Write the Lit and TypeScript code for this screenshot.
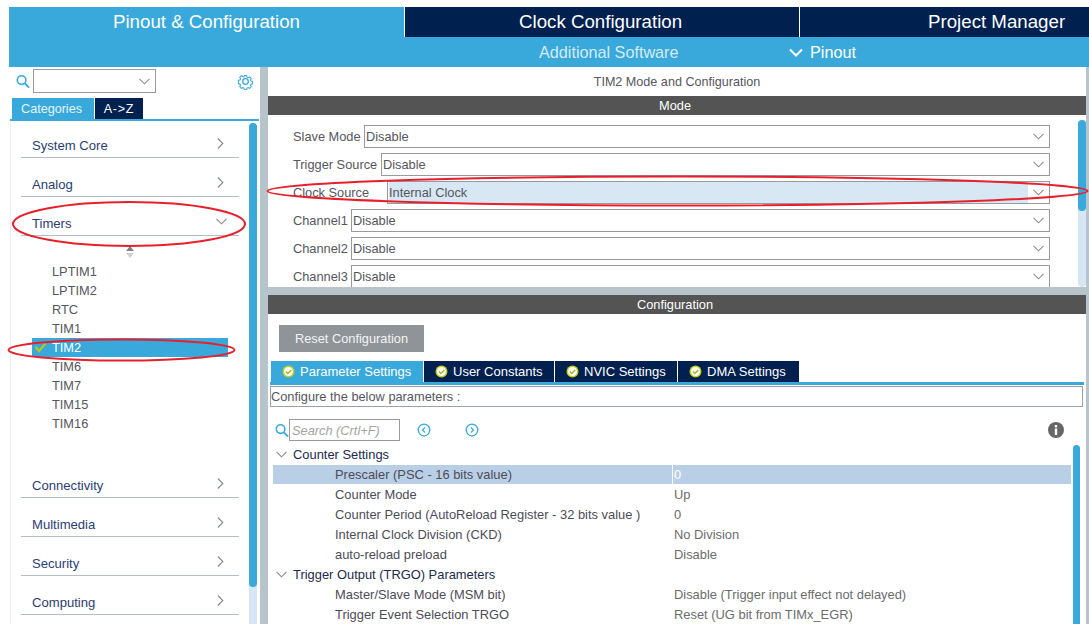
import { LitElement, html, css, svg } from "lit";
import { customElement } from "lit/decorators.js";

const chevronDown = (c = "#8b8f93", w = 11) => html`<svg class="chev" width=${w} height="7" viewBox="0 0 11 7"><path d="M.5 .8l5 5 5-5" fill="none" stroke=${c} stroke-width="1.100"/></svg>`;
const chevronRight = html`<svg class="chev" width="7" height="11" viewBox="0 0 7 11"><path d="M.8 .5l5 5-5 5" fill="none" stroke="#85898d" stroke-width="1.100"/></svg>`;
const searchIcon = html`<svg class="glass" width="14" height="15" viewBox="0 0 15 15"><circle cx="6" cy="6" r="4.600" fill="none" stroke="#39a9db" stroke-width="1.700"/><path d="M9.500 9.500L14 14" stroke="#39a9db" stroke-width="2"/></svg>`;
const checkBadge = html`<svg class="badge" width="13" height="13" viewBox="0 0 13 13"><circle cx="6.500" cy="6.500" r="6" fill="#c3cf1e"/><circle cx="6.500" cy="6.500" r="4.500" fill="#fff"/><path d="M3.800 6.500l2 2 3.500-3.500" fill="none" stroke="#a9b81a" stroke-width="1.500"/></svg>`;

@customElement("app-root")
export class AppRoot extends LitElement {
  static styles = css`
    :host { display: block; position: relative; width: 1089px; height: 624px; overflow: hidden; background: #fff; font-family: "Liberation Sans", Arial, sans-serif; font-size: 12.8px; color: #56565e; }
    .top { padding: 7px 0 0 9px; }
    .tabs { display: grid; grid-template-columns: 395px 394px 289px; column-gap: 1px; height: 30px; background: #fff; }
    .tab { background: #002050; color: #fff; font-size: 18.7px; display: flex; align-items: center; box-sizing: border-box; }
    .tab.on { background: #39a9db; padding-left: 104px; }
    .tab.clock { padding-left: 114px; }
    .tab.pm { padding-left: 128px; }
    .sub { height: 30px; background: #39a9db; color: #fff; font-size: 16.2px; display: flex; align-items: center; }
    .sub .add { margin-left: 530px; color: #d5ebf6; width: 250px; }
    .sub .pin { display: flex; align-items: center; gap: 7px; }
    .main { display: flex; height: 557px; }
    .left { width: 260px; flex: none; display: flex; flex-direction: column; }
    .splitter { width: 8px; flex: none; background: #b8c4cb; }
    .right { width: 818px; flex: none; display: flex; flex-direction: column; }
    .edge { width: 3px; flex: none; background: #b8c4cb; }
    .sr { display: flex; align-items: center; height: 31px; padding: 0 0 3px 16px; box-sizing: border-box; }
    .combo { width: 123px; height: 24px; margin-left: 3px; border: 1px solid #9a9a9a; box-sizing: border-box; display: flex; align-items: center; justify-content: flex-end; padding-right: 5px; }
    .gear { margin-left: 81px; }
    .ltabs { display: flex; gap: 1px; height: 21px; padding-left: 12px; }
    .ltab { background: #39a9db; color: #e6f4fb; width: 82px; display: flex; align-items: center; justify-content: center; font-size: 12.6px; padding-right: 3px; box-sizing: border-box; }
    .ltab.off { background: #002050; width: 48px; color: #fff; letter-spacing: 0.7px; padding-right: 0; }
    .lline { height: 2px; margin-left: 10px; width: 249px; background: #39a9db; }
    .lbody { flex: 1; display: flex; margin-left: 10px; border-left: 1px solid #eef0f1; min-height: 0; padding-left: 10px; }
    .cats { width: 218px; flex: none; }
    .cat { height: 35px; margin-top: 4px; box-sizing: border-box; border-bottom: 1px solid #b4bdc4; display: flex; align-items: flex-end; justify-content: space-between; padding: 0 15px 3px 11px; color: #2c3d72; line-height: 17px; font-size: 13.1px; }
    .cat:first-child { margin-top: 2px; }
    .cat svg { margin-bottom: 5px; }
    .cat.open svg { margin-bottom: 7px; margin-right: -3px; }
    .handle { display: flex; justify-content: center; height: 21px; padding: 10px 0 0 0; box-sizing: border-box; width: 218px; }
    .items { height: 202px; margin-left: 11px; width: 196px; padding-top: 5px; box-sizing: border-box; }
    .item { height: 19px; line-height: 19px; padding-left: 20px; position: relative; }
    .item.picked { background: #39a9db; color: #fff; }
    .item svg { position: absolute; left: 2px; top: 4px; }
    .lscroll { width: 8px; margin: 2px 0 0 10px; background: #d6e6f4; border-radius: 4px 4px 0 0; flex: none; }
    .lthumb { height: 464px; background: #39a9db; border-radius: 4px; }
    .mode { height: 220px; flex: none; display: flex; flex-direction: column; }
    .title { height: 29px; display: flex; align-items: center; justify-content: center; font-size: 12.6px; box-sizing: border-box; }
    .bar { height: 19px; background: #535453; color: #fff; display: flex; align-items: center; justify-content: center; flex: none; padding-right: 4px; box-sizing: border-box; }
    .mbody { height: 172px; display: flex; overflow: hidden; }
    .sels { width: 810px; padding: 10px 0 0 25px; box-sizing: border-box; flex: none; }
    .srow { height: 23px; margin-bottom: 5px; display: flex; align-items: center; width: 757px; }
    .srow .lab { white-space: nowrap; flex: none; }
    .sel { flex: 1; height: 23px; border: 1px solid #9a9a9a; box-sizing: border-box; display: flex; align-items: center; justify-content: space-between; padding: 0 0 0 1px; }
    .sel .chev { margin-right: 5px; flex: none; }
    .sel .val { flex: 1; height: 100%; display: flex; align-items: center; margin-right: 5px; }
    .srow.hi .val { background: #d8e7f4; }
    .mscroll { width: 8px; margin-top: 5px; background: #d6e6f4; border-radius: 4px; flex: none; height: 167px; }
    .mthumb { height: 91px; background: #39a9db; border-radius: 4px; }
    .gapbar { height: 8px; background: #b8c4cb; flex: none; }
    .config { flex: 1; display: flex; flex-direction: column; min-height: 0; }
    .reset { margin: 11px 0 0 11px; width: 145px; height: 27px; background: #8f9499; color: #f2f4f5; display: flex; align-items: center; justify-content: center; }
    .ctabs { display: flex; gap: 1px; height: 21px; margin: 9px 0 0 3px; }
    .ctab { background: #002050; color: #fff; display: flex; align-items: center; gap: 5px; font-size: 13px; box-sizing: border-box; padding-left: 11px; }
    .ctab.on { background: #39a9db; }
    .cline { height: 3px; background: #39a9db; margin-left: 2px; width: 814px; flex: none; }
    .desc { height: 21px; margin: 1px 0 0 2px; width: 813px; border: 1px solid #9aa2a8; box-sizing: border-box; display: flex; align-items: center; flex: none; }
    .tools { display: flex; align-items: center; height: 22px; margin-top: 12px; padding-left: 7px; flex: none; }
    .find { width: 111px; height: 22px; border: 1px solid #9a9a9a; box-sizing: border-box; display: flex; align-items: center; padding-left: 2px; color: #a3a3a3; font-style: italic; }
    .nav1 { margin-left: 17px; }
    .nav2 { margin-left: 34px; }
    .info { margin-left: 569px; }
    .tbody { flex: 1; display: flex; min-height: 0; padding-top: 4px; }
    .tree { width: 798px; margin-left: 5px; flex: none; }
    .node { height: 20px; display: flex; align-items: center; color: #1c2a4a; gap: 6px; padding: 0 0 1px 3px; box-sizing: border-box; font-size: 12.9px; }
    .node .chev { flex: none; }
    .leaf { height: 20px; display: grid; grid-template-columns: 399px 1fr; align-items: center; font-size: 12.9px; padding-bottom: 1px; box-sizing: border-box; }
    .leaf .k { padding-left: 62px; white-space: nowrap; color: #4c4c58; }
    .leaf .v { padding-left: 2px; white-space: nowrap; color: #6c6c6c; }
    .leaf.sel2 { background: #b9cfe6; height: 19px; margin-bottom: 1px; padding-bottom: 0; }
    .leaf.sel2 .v { color: #fff; border-left: 1px solid #fff; height: 100%; display: flex; align-items: center; padding-left: 1px; }
    .tscroll { width: 7px; margin-left: 2px; background: #39a9db; border-radius: 4px 4px 0 0; flex: none; }
    .rings { position: absolute; inset: 0; pointer-events: none; }
  `;

  render() {
    const cats1 = ["System Core", "Analog"];
    const cats2 = ["Connectivity", "Multimedia", "Security", "Computing"];
    const timers = ["LPTIM1", "LPTIM2", "RTC", "TIM1", "TIM2", "TIM6", "TIM7", "TIM15", "TIM16"];
    const sels: [string, string, number][] = [
      ["Slave Mode", "Disable", 71], ["Trigger Source", "Disable", 88], ["Clock Source", "Internal Clock", 94],
      ["Channel1", "Disable", 58], ["Channel2", "Disable", 58], ["Channel3", "Disable", 58],
    ];
    const ctabs = [["Parameter Settings", 152], ["User Constants", 130], ["NVIC Settings", 122], ["DMA Settings", 121]] as const;
    const tree: [number, string, string?][] = [
      [0, "Counter Settings"],
      [2, "Prescaler (PSC - 16 bits value)", "0"],
      [1, "Counter Mode", "Up"],
      [1, "Counter Period (AutoReload Register - 32 bits value )", "0"],
      [1, "Internal Clock Division (CKD)", "No Division"],
      [1, "auto-reload preload", "Disable"],
      [0, "Trigger Output (TRGO) Parameters"],
      [1, "Master/Slave Mode (MSM bit)", "Disable (Trigger input effect not delayed)"],
      [1, "Trigger Event Selection TRGO", "Reset (UG bit from TIMx_EGR)"],
    ];
    return html`
      <div class="top">
        <div class="tabs">
          <div class="tab on">Pinout &amp; Configuration</div>
          <div class="tab clock">Clock Configuration</div>
          <div class="tab pm">Project Manager</div>
        </div>
        <div class="sub">
          <span class="add">Additional Software</span>
          <span class="pin"><svg width="14" height="9" viewBox="0 0 14 9"><path d="M1 1.500l6 6 6-6" fill="none" stroke="#fff" stroke-width="2"/></svg>Pinout</span>
        </div>
      </div>
      <div class="main">
        <div class="left">
          <div class="sr">
            ${searchIcon}
            <div class="combo">${chevronDown()}</div>
            <svg class="gear" width="17" height="17" viewBox="0 0 17 17"><circle cx="8.500" cy="8.500" r="2.800" fill="none" stroke="#39a9db" stroke-width="1.300"/><path d="M7 1h3l.4 2 1.500.7 1.800-1 2 2.100-1 1.700.7 1.500 2 .4v3l-2 .4-.7 1.500 1 1.800-2 2-1.800-1-1.500.7-.4 2H7l-.4-2-1.500-.7-1.800 1-2-2 1-1.800-.7-1.500-2-.4V7l2-.4.700-1.500-1-1.700 2-2.100 1.800 1L6.600 3z" transform="translate(1.700 1.700) scale(.8)" fill="none" stroke="#39a9db" stroke-width="1.300"/></svg>
          </div>
          <div class="ltabs"><div class="ltab">Categories</div><div class="ltab off">A-&gt;Z</div></div>
          <div class="lline"></div>
          <div class="lbody">
            <div class="cats">
              ${cats1.map((c) => html`<div class="cat"><span>${c}</span>${chevronRight}</div>`)}
              <div class="cat open"><span>Timers</span>${chevronDown("#85898d")}</div>
              <div class="handle"><svg width="10" height="12" viewBox="0 0 10 12"><path d="M5 0l4 5H1z" fill="#7d8184"/><path d="M5 12l4-5H1z" fill="#cfd2d4"/></svg></div>
              <div class="items">
                ${timers.map((t) => t === "TIM2"
                  ? html`<div class="item picked"><svg width="13" height="11" viewBox="0 0 13 11"><path d="M1.500 5l3.500 4L11.500 1.500" fill="none" stroke="#b9c51f" stroke-width="2.200"/></svg>${t}</div>`
                  : html`<div class="item">${t}</div>`)}
              </div>
              ${cats2.map((c) => html`<div class="cat"><span>${c}</span>${chevronRight}</div>`)}
            </div>
            <div class="lscroll"><div class="lthumb"></div></div>
          </div>
        </div>
        <div class="splitter"></div>
        <div class="right">
          <div class="mode">
            <div class="title">TIM2 Mode and Configuration</div>
            <div class="bar">Mode</div>
            <div class="mbody">
              <div class="sels">
                ${sels.map(([l, v, w], i) => html`<div class="srow ${i === 2 ? "hi" : ""}"><span class="lab" style="width:${w}px">${l}</span><div class="sel"><span class="val">${v}</span>${chevronDown()}</div></div>`)}
              </div>
              <div class="mscroll"><div class="mthumb"></div></div>
            </div>
          </div>
          <div class="gapbar"></div>
          <div class="config">
            <div class="bar">Configuration</div>
            <div class="reset">Reset Configuration</div>
            <div class="ctabs">
              ${ctabs.map(([t, w], i) => html`<div class="ctab ${i === 0 ? "on" : ""}" style="width:${w}px">${checkBadge}${t}</div>`)}
            </div>
            <div class="cline"></div>
            <div class="desc">Configure the below parameters :</div>
            <div class="tools">
              ${searchIcon}
              <div class="find">Search (Crtl+F)</div>
              <svg class="nav1" width="14" height="14" viewBox="0 0 14 14"><circle cx="7" cy="7" r="5.800" fill="none" stroke="#39a9db" stroke-width="1.300"/><path d="M8 4.500L5.500 7 8 9.500" fill="none" stroke="#39a9db" stroke-width="1.200"/></svg>
              <svg class="nav2" width="14" height="14" viewBox="0 0 14 14"><circle cx="7" cy="7" r="5.800" fill="none" stroke="#39a9db" stroke-width="1.300"/><path d="M6 4.500L8.500 7 6 9.500" fill="none" stroke="#39a9db" stroke-width="1.200"/></svg>
              <svg class="info" width="16" height="16" viewBox="0 0 16 16"><circle cx="8" cy="8" r="8" fill="#666"/><rect x="6.800" y="3" width="2.400" height="2.400" fill="#fff"/><rect x="6.800" y="6.500" width="2.400" height="6.500" fill="#fff"/></svg>
            </div>
            <div class="tbody">
              <div class="tree">
                ${tree.map(([k, a, b]) => k === 0
                  ? html`<div class="node">${chevronDown("#85898d")}<span>${a}</span></div>`
                  : html`<div class="leaf ${k === 2 ? "sel2" : ""}"><span class="k">${a}</span><span class="v">${b}</span></div>`)}
              </div>
              <div class="tscroll"></div>
            </div>
          </div>
        </div>
        <div class="edge"></div>
      </div>
      <svg class="rings" width="1089" height="624" viewBox="0 0 1089 624">
        ${svg`<g fill="none" stroke="#e8202c" stroke-width="2">
          <ellipse cx="129" cy="224" rx="116" ry="22"/>
          <ellipse cx="121.500" cy="350" rx="113" ry="10.500"/>
          <ellipse cx="677.500" cy="191" rx="410" ry="14.500"/>
        </g>`}
      </svg>
    `;
  }
}
